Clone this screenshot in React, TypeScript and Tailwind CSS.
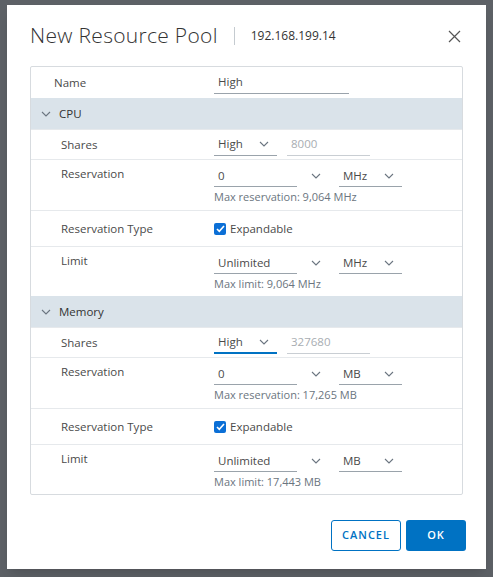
const Chev = () => (
  <svg width="10" height="6" viewBox="0 0 10 6" fill="none"><path d="M1 1l4 4 4-4" stroke="#6b7580" strokeWidth="1.1" /></svg>
);

const Select = ({ value, w, active }: { value: string; w: string; active?: boolean }) => (
  <div className={`flex items-center justify-between h-[22px] pl-1 pr-2 border-b ${active ? "border-[#0072c3] border-b-2" : "border-[#9aa3ab]"} ${w}`}>
    <span>{value}</span>
    <Chev />
  </div>
);

const Combo = ({ value }: { value: string }) => (
  <div className="flex items-center w-[120px]">
    <div className="w-[83px] h-[22px] pl-1 border-b border-[#9aa3ab] flex items-center">{value}</div>
    <div className="flex-1 flex justify-center"><Chev /></div>
  </div>
);

const Row = ({ label, children, h, top }: { label: string; children: React.ReactNode; h: string; top?: boolean }) => (
  <div className={`flex border-t border-[#e6e9ec] ${h} ${top ? "items-start pt-[5px]" : "items-center"}`}>
    <div className="w-[183px] pl-[30px]">{label}</div>
    <div>{children}</div>
  </div>
);

const Check = () => (
  <div className="flex items-center gap-1">
    <span className="w-[12px] h-[12px] rounded-[2px] bg-[#0b6fd6] flex items-center justify-center">
      <svg width="9" height="8" viewBox="0 0 9 8"><path d="M1 4l2.3 2.3L8 1" stroke="white" strokeWidth="1.6" fill="none" /></svg>
    </span>
    <span>Expandable</span>
  </div>
);

const Section = ({ title, unit, shares, maxRes, maxLim, active }: { title: string; unit: string; shares: string; maxRes: string; maxLim: string; active?: boolean }) => (
  <>
    <div className="h-[31px] bg-[#dae3ea] flex items-center pl-[10px] gap-[8px] text-[#333]">
      <Chev />
      <span>{title}</span>
    </div>
    <Row label="Shares" h="h-[30px]">
      <div className="flex gap-[10px]">
        <Select value="High" w="w-[63px]" active={active} />
        <div className="w-[83px] h-[22px] pl-1 border-b border-[#c9ced3] text-[#a8adb2] flex items-center">{shares}</div>
      </div>
    </Row>
    <Row label="Reservation" h="h-[51px]" top>
      <div className="flex gap-[5px]"><Combo value="0" /><Select value={unit} w="w-[63px]" /></div>
      <div className="text-[#6b7580] text-[11px] mt-[2px]">{maxRes}</div>
    </Row>
    <Row label="Reservation Type" h="h-[36px]"><Check /></Row>
    <Row label="Limit" h="h-[50px]" top>
      <div className="flex gap-[5px]"><Combo value="Unlimited" /><Select value={unit} w="w-[63px]" /></div>
      <div className="text-[#6b7580] text-[11px] mt-[2px]">{maxLim}</div>
    </Row>
  </>
);

export default function App() {
  return (
    <div className="w-[493px] h-[577px] bg-[#5d6166] pt-[5px] pl-[7px]" style={{ fontFamily: "'Open Sans', 'Noto Sans', sans-serif" }}>
      <div className="w-[479px] h-[564px] bg-white shadow-lg pt-[20px] px-[23px] text-[11.5px] text-[#4a4a4a]">
        <div className="flex items-center h-[22px]">
          <span className="text-[21px] font-light text-[#333] tracking-[0.3px]">New Resource Pool</span>
          <span className="w-px h-[18px] bg-[#c5cbd0] mx-[16px]" />
          <span className="text-[12px] text-[#333]">192.168.199.14</span>
          <svg className="ml-auto mr-[2px]" width="13" height="13" viewBox="0 0 13 13"><path d="M1 1l11 11M12 1L1 12" stroke="#555" strokeWidth="1.2" /></svg>
        </div>
        <div className="mt-[19px] border border-[#d7dbdf] rounded-[2px]">
          <div className="flex items-center h-[31px]">
            <div className="w-[183px] pl-[23px]">Name</div>
            <div className="w-[135px] h-[22px] pl-1 border-b border-[#9aa3ab] flex items-center">High</div>
          </div>
          <Section title="CPU" unit="MHz" shares="8000" maxRes="Max reservation: 9,064 MHz" maxLim="Max limit: 9,064 MHz" />
          <Section title="Memory" unit="MB" shares="327680" maxRes="Max reservation: 17,265 MB" maxLim="Max limit: 17,443 MB" active />
        </div>
        <div className="flex justify-end gap-[5px] mt-[25px] mr-[-3px]">
          <button className="w-[70px] h-[31px] border border-[#0072c3] rounded-[3px] text-[#0072c3] text-[11px] font-semibold tracking-[1px]">CANCEL</button>
          <button className="w-[60px] h-[31px] bg-[#0072c3] rounded-[3px] text-white text-[11px] font-semibold tracking-[1px]">OK</button>
        </div>
      </div>
    </div>
  );
}
